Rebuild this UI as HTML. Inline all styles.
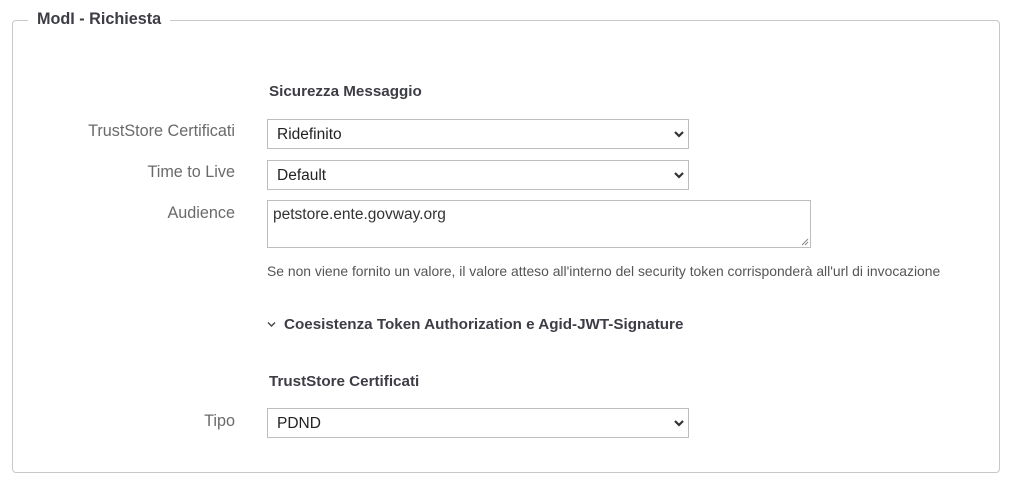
<!DOCTYPE html>
<html><head><meta charset="utf-8"><style>
body{margin:0;width:1013px;height:480px;background:#fff;font-family:"Liberation Sans",sans-serif;position:relative;overflow:hidden}
.a{position:absolute;white-space:nowrap}
.fs{position:absolute;left:12px;top:20px;width:986px;height:451px;border:1px solid #c8c8c8;border-radius:4px}
.lg{left:28px;top:10px;background:#fff;padding:0 9px;font-weight:bold;font-size:16.2px;color:#3d3d45}
.h{font-weight:bold;font-size:15.2px;color:#3d3d45}
.lb{font-size:16.2px;color:#6a6a6a;text-align:right;width:220px;left:15px}
.sel{position:absolute;left:267px;width:420px;height:28px;border:1px solid #bdbdbd;box-sizing:content-box;font-size:15.5px;color:#222}
.sel span{position:absolute;left:9px;top:6px}
.sel svg{position:absolute;right:4px;top:10px}
.ta{position:absolute;left:267px;top:200px;width:542px;height:46px;border:1px solid #bdbdbd;font-size:15.5px;color:#333}
</style></head><body>
<div class="fs"></div>
<div class="a lg">ModI - Richiesta</div>
<div class="a h" style="left:269px;top:83px">Sicurezza Messaggio</div>
<div class="a lb" style="top:122px">TrustStore Certificati</div>
<div class="sel" style="top:119px"><span>Ridefinito</span><svg width="10" height="8" viewBox="0 0 10 8"><path d="M1 2l4 4 4-4" stroke="#333" stroke-width="2.2" fill="none"/></svg></div>
<div class="a lb" style="top:163px">Time to Live</div>
<div class="sel" style="top:160px"><span>Default</span><svg width="10" height="8" viewBox="0 0 10 8"><path d="M1 2l4 4 4-4" stroke="#333" stroke-width="2.2" fill="none"/></svg></div>
<div class="a lb" style="top:204px">Audience</div>
<div class="ta"><span class="a" style="left:5px;top:5px">petstore.ente.govway.org</span>
<svg class="a" style="right:1px;bottom:1px" width="8" height="8"><path d="M7 1L1 7M7 4L4 7" stroke="#888" stroke-width="1"/></svg></div>
<div class="a" style="left:267px;top:263px;font-size:13.9px;color:#555">Se non viene fornito un valore, il valore atteso all'interno del security token corrisponderà all'url di invocazione</div>
<svg class="a" style="left:267px;top:321px" width="9" height="7" viewBox="0 0 9 7"><path d="M1 1.5l3.5 3.5 3.5-3.5" stroke="#444" stroke-width="1.4" fill="none"/></svg>
<div class="a h" style="left:284px;top:316px">Coesistenza Token Authorization e Agid-JWT-Signature</div>
<div class="a h" style="left:269px;top:373px">TrustStore Certificati</div>
<div class="a lb" style="top:412px">Tipo</div>
<div class="sel" style="top:408px"><span>PDND</span><svg width="10" height="8" viewBox="0 0 10 8"><path d="M1 2l4 4 4-4" stroke="#333" stroke-width="2.2" fill="none"/></svg></div>
</body></html>
